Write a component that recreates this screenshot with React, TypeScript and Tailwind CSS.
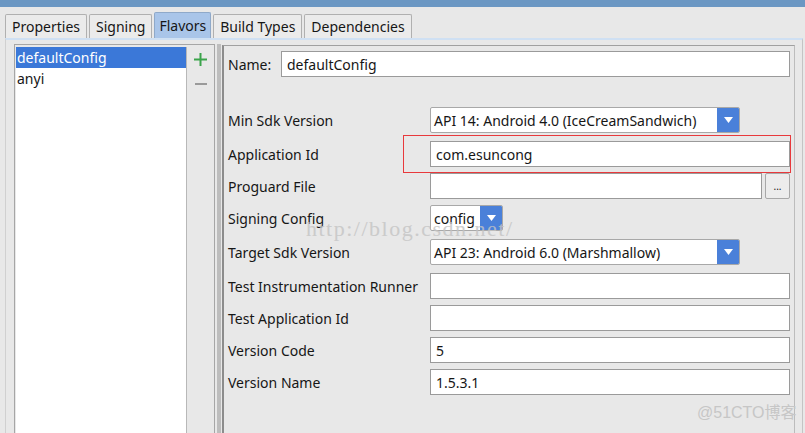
import { useState } from "react";

const font = { fontFamily: '"Noto Sans", "Open Sans", Arial, sans-serif' };

const tabs = ["Properties", "Signing", "Flavors", "Build Types", "Dependencies"];

function Arrow() {
    return (
        <div className="w-[22px] h-full bg-[#4a80d9] flex items-center justify-center">
            <svg width="9" height="6" viewBox="0 0 9 6">
                <path d="M0 0 H9 L4.5 6 Z" fill="#ffffff" />
            </svg>
        </div>
    );
}

function Combo({ value, width }: { value: string; width: string }) {
    return (
        <div className={`${width} h-[26px] bg-white border border-[#a8a8a8] rounded-[2px] flex items-center overflow-hidden`}>
            <span className="flex-1 pl-[3px] whitespace-nowrap">{value}</span>
            <Arrow />
        </div>
    );
}

function Field({ value = "" }: { value?: string }) {
    return (
        <div className="w-[360px] h-[26px] bg-white border border-[#9a9a9a] flex items-center pl-[5px]">
            {value}
        </div>
    );
}

export default function App() {
    const [selected] = useState(0);

    return (
        <div
            className="w-[805px] h-[433px] bg-[#e8e8e8] flex flex-col overflow-hidden relative text-[#161616] text-[14px]"
            style={font}
        >
            {/* window title strip */}
            <div className="h-[7px] bg-[#6b97c3] shrink-0" />

            {/* Tabs */}
            <div className="h-[31px] flex items-end pl-[5px] gap-[2px] shrink-0">
                {tabs.map((t) =>
                    t === "Flavors" ? (
                        <div
                            key={t}
                            className="h-[26px] px-[4px] bg-[#a9c5e9] border border-b-0 border-[#8fa9c9] rounded-t-[2px] flex items-center"
                        >
                            {t}
                        </div>
                    ) : (
                        <div
                            key={t}
                            className="h-[24px] px-[6px] bg-[#ebebeb] border border-b-0 border-[#b0b0b0] rounded-t-[2px] flex items-center"
                        >
                            {t}
                        </div>
                    )
                )}
            </div>

            {/* Content */}
            <div className="flex-1 ml-[5px] mr-[2px] border-t-2 border-t-[#cfe0f3] border-l border-l-[#d0d0d0] border-r border-r-[#c4c4c4] flex pt-[4px] pl-[8px]">
                {/* Flavor list */}
                <div className="w-[201px] border-l border-t border-[#a6a6a6] flex">
                    <div className="w-[171px] bg-white border-r border-[#b8b8b8] mt-[2px] ml-[1px]">
                        {["defaultConfig", "anyi"].map((f, i) => (
                            <div
                                key={f}
                                className={
                                    i === selected
                                        ? "h-[21px] bg-[#3b78d8] text-white pl-[1px] leading-[21px]"
                                        : "h-[21px] pl-[1px] leading-[21px]"
                                }
                            >
                                {f}
                            </div>
                        ))}
                    </div>
                    <div className="flex-1 border-r border-[#a6a6a6] flex flex-col items-center pt-[8px] gap-[11px]">
                        <svg width="13" height="13" viewBox="0 0 13 13">
                            <rect x="5.5" y="0" width="2" height="13" fill="#3ba34b" />
                            <rect x="0" y="5.5" width="13" height="2" fill="#3ba34b" />
                        </svg>
                        <div className="w-[12px] h-[2px] bg-[#9a9a9a] mt-[6px]" />
                    </div>
                </div>

                {/* Splitter */}
                <div className="w-[4px] ml-[2px] mr-[1px] border-x border-[#bdbdbd] bg-[radial-gradient(#8a8a8a_0.6px,transparent_0.8px)] bg-[length:2px_2px]" />

                {/* Form */}
                <div className="w-[573px] mt-[1px] border-l-2 border-l-[#8c8c8c] border-t border-t-[#a0a0a0] border-r border-r-[#bcbcbc] pl-[4px] relative">
                    <div className="flex items-center mt-[5px] h-[26px]">
                        <span className="w-[53px]">Name:</span>
                        <div className="w-[509px] h-[26px] bg-white border border-[#9a9a9a] flex items-center pl-[5px]">
                            defaultConfig
                        </div>
                    </div>

                    <div className="flex items-center mt-[30px] h-[26px]">
                        <span className="w-[202px]">Min Sdk Version</span>
                        <Combo value="API 14: Android 4.0 (IceCreamSandwich)" width="w-[310px]" />
                    </div>
                    <div className="flex items-center mt-[8px] h-[26px]">
                        <span className="w-[202px]">Application Id</span>
                        <Field value="com.esuncong" />
                    </div>
                    <div className="flex items-center mt-[6px] h-[26px]">
                        <span className="w-[202px]">Proguard File</span>
                        <div className="w-[332px] h-[26px] bg-white border border-[#9a9a9a]" />
                        <div className="w-[25px] h-[26px] ml-[3px] border border-[#a8a8a8] rounded-[2px] bg-[#ececec] text-[10px] flex items-center justify-center leading-none">
                            ...
                        </div>
                    </div>
                    <div className="flex items-center mt-[6px] h-[26px]">
                        <span className="w-[202px]">Signing Config</span>
                        <Combo value="config" width="w-[73px]" />
                    </div>
                    <div className="flex items-center mt-[8px] h-[26px]">
                        <span className="w-[202px]">Target Sdk Version</span>
                        <Combo value="API 23: Android 6.0 (Marshmallow)" width="w-[310px]" />
                    </div>
                    <div className="flex items-center mt-[8px] h-[26px]">
                        <span className="w-[202px] whitespace-nowrap">Test Instrumentation Runner</span>
                        <Field />
                    </div>
                    <div className="flex items-center mt-[6px] h-[26px]">
                        <span className="w-[202px]">Test Application Id</span>
                        <Field />
                    </div>
                    <div className="flex items-center mt-[6px] h-[26px]">
                        <span className="w-[202px]">Version Code</span>
                        <Field value="5" />
                    </div>
                    <div className="flex items-center mt-[6px] h-[26px]">
                        <span className="w-[202px]">Version Name</span>
                        <Field value="1.5.3.1" />
                    </div>

                    {/* annotation box */}
                    <div className="absolute left-[179px] top-[89px] w-[388px] h-[38px] border border-[#e8393c]" />
                </div>
            </div>

            {/* watermarks */}
            <div
                className="absolute left-[306px] top-[212px] text-[22px] text-[#c4c4c4] opacity-80 tracking-[1.5px] pointer-events-none"
                style={{ fontFamily: '"Liberation Serif", serif' }}
            >
                http://blog.csdn.net/
            </div>
            <div
                className="absolute left-[697px] top-[401px] text-[16px] text-[#c6c6c6] pointer-events-none"
                style={{ fontFamily: '"Liberation Sans", "Noto Sans CJK SC", sans-serif' }}
            >
                @51CTO博客
            </div>
        </div>
    );
}
